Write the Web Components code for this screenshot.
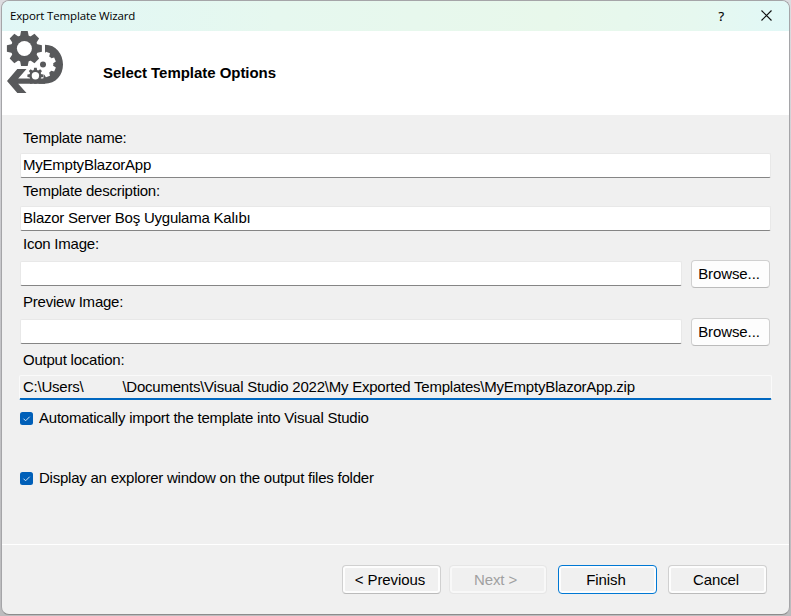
<!DOCTYPE html>
<html lang="en">
<head>
<meta charset="utf-8">
<title>Export Template Wizard</title>
<style>
html,body{margin:0;width:791px;height:616px;overflow:hidden;background:linear-gradient(#dcdce0,#c4c4c8 50%,#bcbcbe)}
body{font-family:"Liberation Sans",Arial,sans-serif;font-size:15px;color:#000;letter-spacing:-.23px}
</style>
</head>
<body>
<wizard-window></wizard-window>
<script>
const define = (name, html, setup) => {
  const t = document.createElement('template');
  t.innerHTML = html;
  customElements.define(name, class extends HTMLElement {
    constructor() {
      super();
      this.attachShadow({mode: 'open'}).append(t.content.cloneNode(true));
    }
    connectedCallback() { if (setup) setup(this, this.shadowRoot); }
  });
};

define('gear-logo', `
<style>:host{display:block;width:64px;height:64px}svg{display:block}</style>
<svg width="64" height="64" viewBox="0 31 64 64" fill="#58595b">
  <defs>
    <path id="tooth" d="M-4.4-12L-3.300-17.500H3.300L4.400-12Z"/>
    <path id="wtooth" d="M-2.800-9L-2.200-13H2.200L2.800-9Z"/>
    <path id="stooth" d="M-1.8-5L-1.3-8H1.3L1.8-5Z"/>
  </defs>
  <path d="M45 44.700C56 44.700 63 54 63 64.500S56 83.700 44.500 83.700H30V75L45 65Z"/>
  <g transform="translate(43 64.500)" fill="#fff">
    <circle r="10.300"/>
    <g id="white-teeth"></g>
    <circle r="3" fill="#58595b"/>
  </g>
  <circle cx="35.400" cy="75.800" r="8.400" fill="#fff"/>
  <path d="M17.300 69H26.500L18.200 78.600H45V83.700H18.200L26.500 93H17.300L7 81Z"/>
  <g transform="translate(35.400 75.800)">
    <circle r="6"/><g id="small-teeth"></g><circle r="3.700" fill="#fff"/>
  </g>
  <g transform="translate(24.400 48.500)">
    <circle r="13.500"/><g id="big-teeth"></g><circle r="7.500" fill="#fff"/>
  </g>
</svg>`, (el, root) => {
  for (const [group, tooth, offset] of [['white-teeth','wtooth',22.5],['small-teeth','stooth',0],['big-teeth','tooth',0]]) {
    const shape = root.getElementById(tooth);
    shape.remove();
    for (let i = 0; i < 8; i++) {
      const c = shape.cloneNode();
      c.removeAttribute('id');
      c.setAttribute('transform', `rotate(${i * 45 + offset})`);
      root.getElementById(group).append(c);
    }
  }
});

define('title-bar', `
<style>
:host{display:flex;align-items:center;height:30px;box-sizing:border-box;padding:0 17.5px 0 8px;background:linear-gradient(90deg,#e1f7f6,#e6f8ef 35%,#e8f8eb 70%,#e6f8ef 88%,#e1f8f7);font:11.5px/30px "Open Sans","Noto Sans",sans-serif}
.t{flex:1;letter-spacing:-.15px}
.q{font-size:13px;line-height:28px;margin:0 36.5px 1px 0;-webkit-text-stroke:.2px #000}
svg{display:block;margin-bottom:2px}
</style>
<span class="t"><slot></slot></span><span class="q">?</span>
<svg width="11" height="11" viewBox="0 0 11 11" stroke="#111" stroke-width="1.150"><path d="M.5.5L10.500 10.500M10.500.5L.5 10.500"/></svg>`);

define('wizard-header', `
<style>
:host{display:flex;height:84px;background:#fff}
gear-logo{margin-left:-2px}
h1{margin:0 0 0 39px;font:bold 15px/84px "Liberation Sans",Arial,sans-serif;letter-spacing:-.04px}
</style>
<gear-logo></gear-logo><h1><slot></slot></h1>`);

define('text-box', `
<style>
:host{display:block;box-sizing:border-box;height:25px;border:1px solid #e8e8e8;border-bottom:1px solid #858585;border-radius:2px;background:#fff;line-height:21px;padding-left:2px;margin-top:var(--drop,0);white-space:nowrap;flex:1}
:host([focused]){border:1px solid #fafafa;border-bottom:2px solid #0067c0;background:#f0f0f0;line-height:22px;margin:0 -1px;padding-left:3px}
</style><slot></slot>`);

define('form-field', `
<style>
:host{display:block}
label{display:block;line-height:20px;height:20px;padding-left:3px}
.row{display:flex;align-items:flex-start;gap:9px;padding-top:var(--gap,5px)}
</style>
<label></label><div class="row"><slot></slot></div>`, (el, root) => {
  root.querySelector('label').textContent = el.getAttribute('label');
});

define('push-button', `
<style>
:host{display:block;box-sizing:border-box;width:99px;height:29px;border:1px solid #d0d0d0;border-bottom-color:#bbb;border-radius:4px;background:#f0f0f0;box-shadow:inset 0 0 0 2px #fdfdfd;text-align:center;line-height:27px;padding-right:3px;letter-spacing:-.1px}
:host([browse]){width:79px;height:28px;background:#fdfdfd;line-height:26px}
:host([primary]){border-color:#0078d4}
:host([disabled]){border-color:#e6e6e6;box-shadow:inset 0 0 0 2px #f8f8f8;color:#a0a0a0;width:98px;margin-right:1px;padding-right:5px}
</style><slot></slot>`);

define('check-option', `
<style>
:host{display:flex;align-items:center;height:20px;line-height:20px;gap:6px}
svg{display:block}
</style>
<svg width="13" height="13" viewBox="0 0 13 13"><rect width="13" height="13" rx="2.500" fill="#005fb8"/><path d="M3.500 6.700L5.600 8.800L9.700 4.700" fill="none" stroke="#d5e5f4" stroke-width="1"/></svg>
<span><slot></slot></span>`);

define('wizard-window', `
<style>
:host{display:flex;flex-direction:column;box-sizing:border-box;width:789px;height:615px;margin-left:1px;border:1px solid #a5a5a8;border-bottom-color:#8c8c8c;border-radius:8px;overflow:hidden;background:#f0f0f0}
main{flex:1;padding:13px 18px 0 18px;display:flex;flex-direction:column}
form-field{margin-bottom:3px}
.c{margin-bottom:4px;--gap:6px;--drop:1px}
.d{margin-bottom:8px}
.gap{display:inline-block;width:39px}
check-option + check-option{margin-top:40px}
footer{box-sizing:border-box;height:70px;border-top:1px solid #fff;display:flex;justify-content:flex-end;padding:20px 22px 0 0}
footer push-button + push-button{margin-left:var(--m,0)}
form-field push-button{margin-right:1px}
</style>
<title-bar>Export Template Wizard</title-bar>
<wizard-header>Select Template Options</wizard-header>
<main>
<form-field label="Template name:"><text-box>MyEmptyBlazorApp</text-box></form-field>
<form-field label="Template description:"><text-box>Blazor Server Boş Uygulama Kalıbı</text-box></form-field>
<form-field class="c" label="Icon Image:"><text-box></text-box><push-button browse>Browse...</push-button></form-field>
<form-field class="c" label="Preview Image:"><text-box></text-box><push-button browse>Browse...</push-button></form-field>
<form-field class="d" label="Output location:"><text-box focused>C:\\Users\\<span class="gap"></span>\\Documents\\Visual Studio 2022\\My Exported Templates\\MyEmptyBlazorApp.zip</text-box></form-field>
<check-option>Automatically import the template into Visual Studio</check-option>
<check-option>Display an explorer window on the output files folder</check-option>
</main>
<footer>
<push-button>&lt; Previous</push-button>
<push-button disabled style="--m:8px">Next &gt;</push-button>
<push-button primary style="--m:10px">Finish</push-button>
<push-button style="--m:11px">Cancel</push-button>
</footer>`);
</script>
</body>
</html>
